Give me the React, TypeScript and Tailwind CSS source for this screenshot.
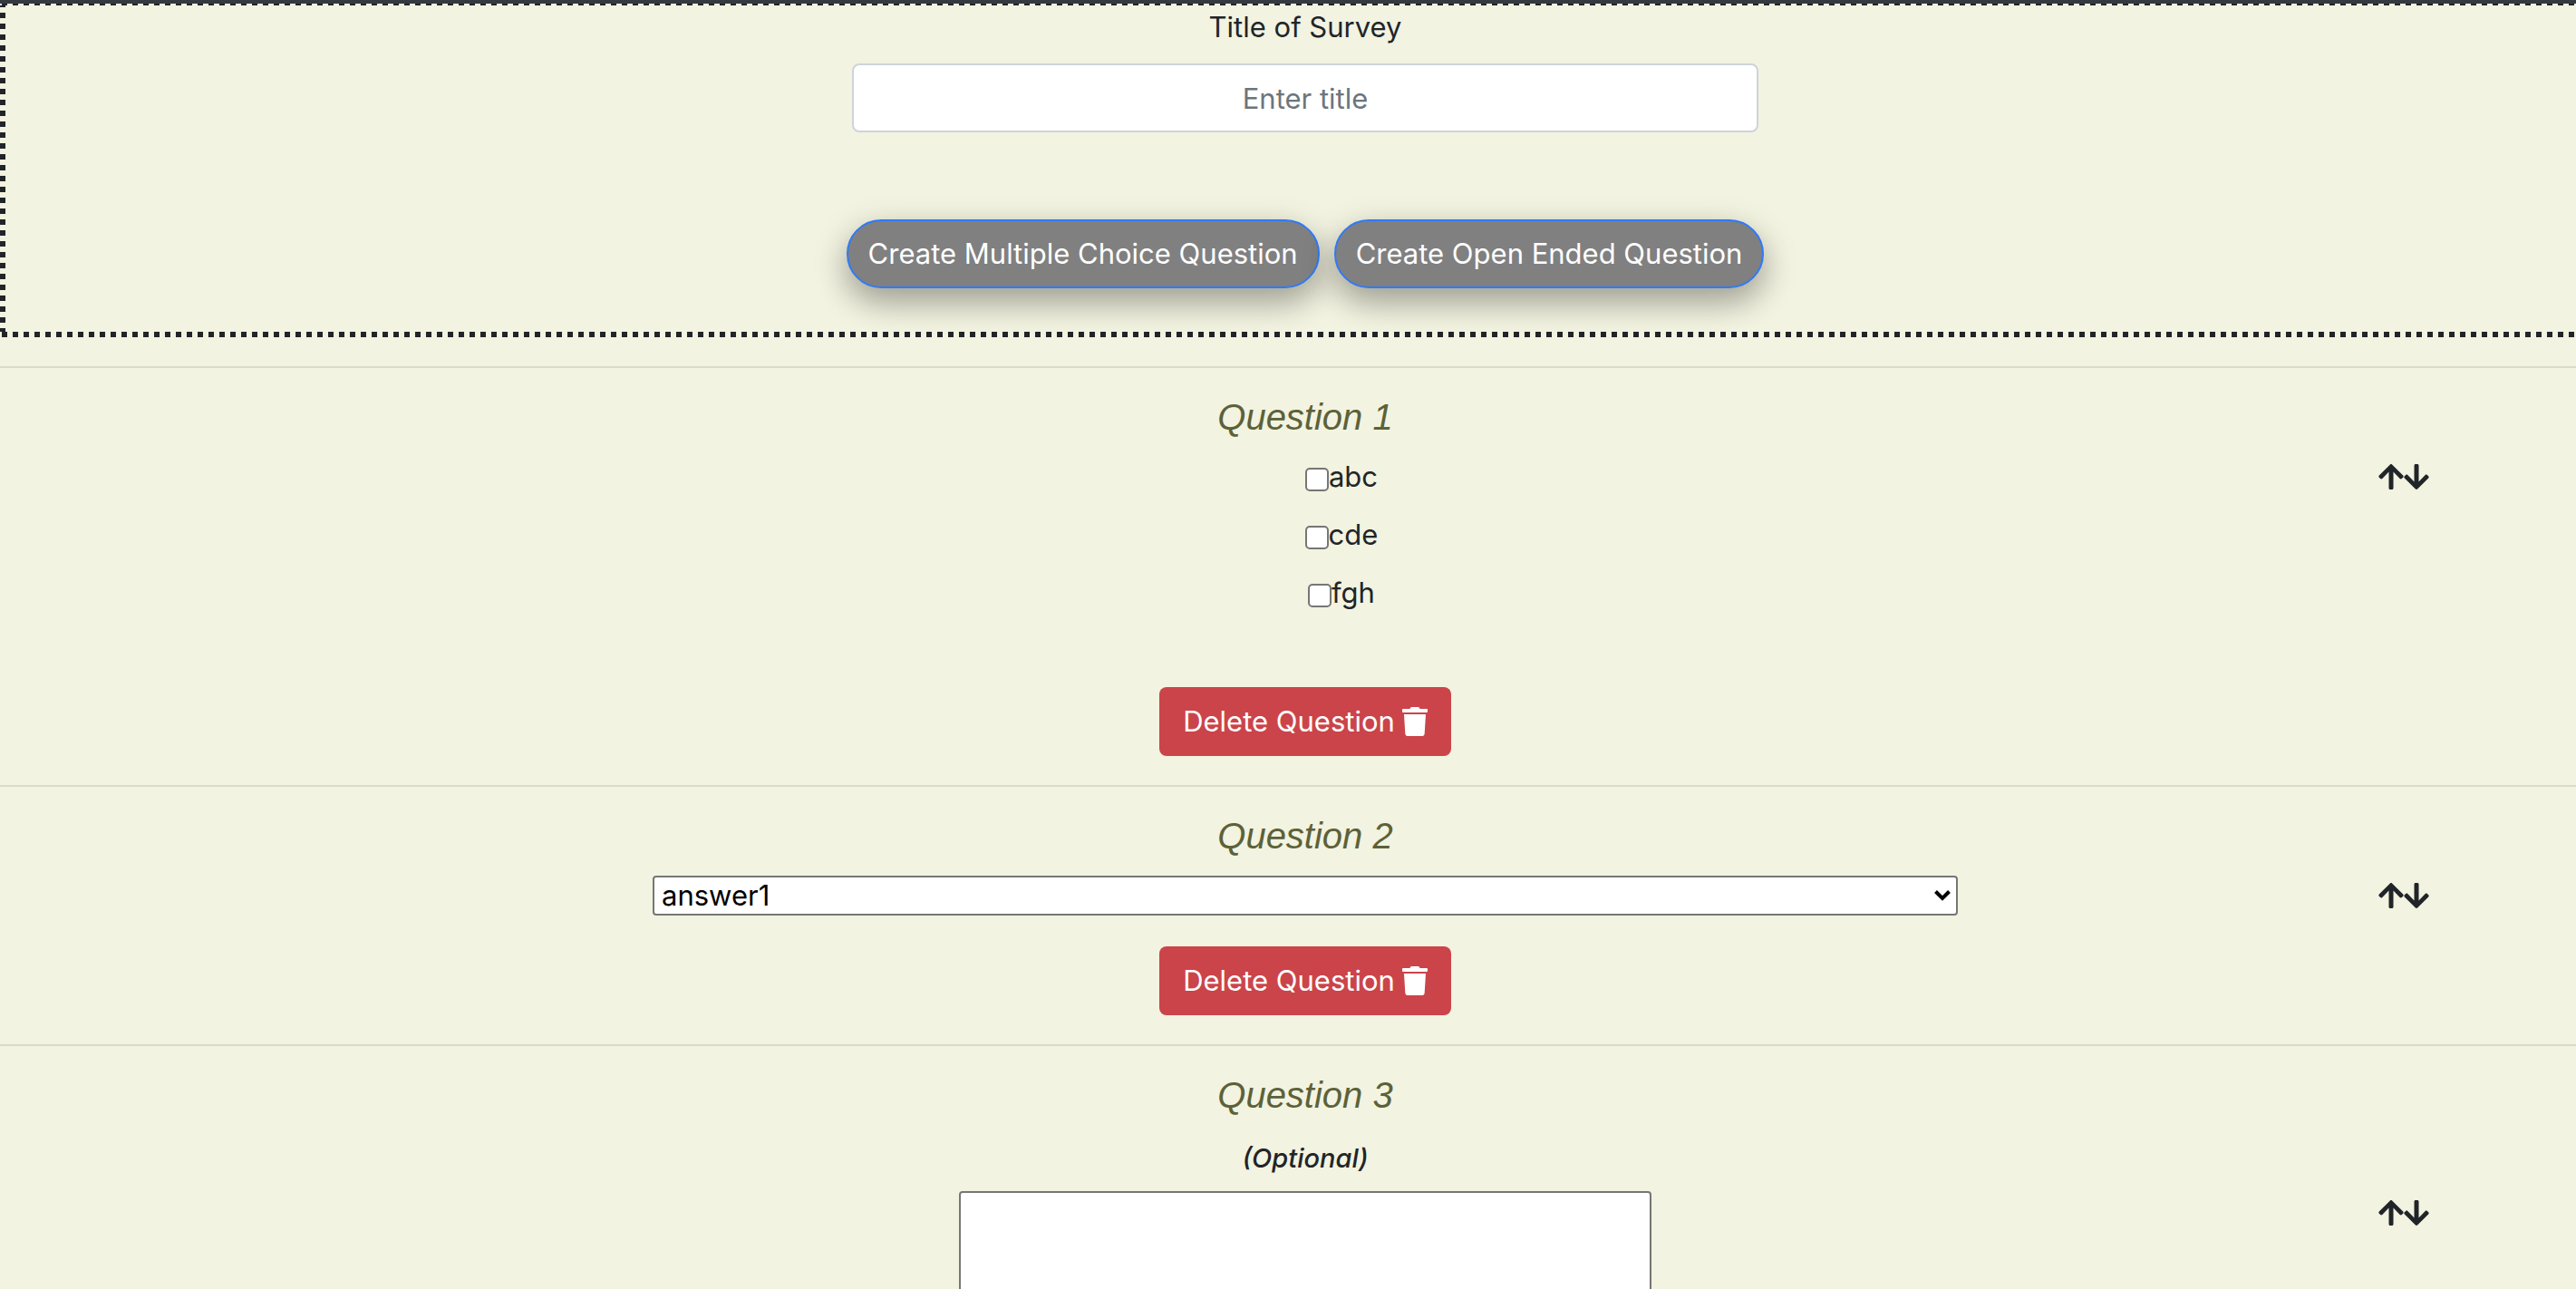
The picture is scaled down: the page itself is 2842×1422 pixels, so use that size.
import type { ReactNode } from 'react'
import { FaArrowDown, FaArrowUp, FaTrash } from 'react-icons/fa'

const horizontalDots =
  'bg-[repeating-linear-gradient(90deg,transparent_0_2px,#212529_2px_8px,transparent_8px_12px)]'
const verticalDots =
  'bg-[repeating-linear-gradient(180deg,#212529_0_2px,transparent_2px_8px,#212529_8px_12px)]'

function CreateButton({ children }: { children: ReactNode }) {
  return (
    <button
      type="button"
      className="h-[76px] rounded-full border-2 border-[#2f7af6] bg-[#808080] px-[22px] text-white shadow-[0_16px_32px_rgba(0,0,0,0.2),0_12px_40px_rgba(0,0,0,0.19)]"
    >
      {children}
    </button>
  )
}

function SurveyHeader() {
  return (
    <header>
      <div className="h-1 bg-[#343a40]" />
      <div className={`h-0.5 ${horizontalDots}`} />
      <div className="flex">
        <div className={`w-1.5 ${verticalDots}`} />
        <form className="flex flex-1 flex-col items-center pb-12">
          <label htmlFor="title">Title of Survey</label>
          <input
            id="title"
            type="text"
            placeholder="Enter title"
            className="mt-4 h-[76px] w-[1000px] rounded-lg border-2 border-[#ced4da] bg-white text-center placeholder:text-[#6c757d]"
          />
          <div className="mt-24 flex gap-4">
            <CreateButton>Create Multiple Choice Question</CreateButton>
            <CreateButton>Create Open Ended Question</CreateButton>
          </div>
        </form>
        <div className={`w-1.5 ${verticalDots}`} />
      </div>
      <div className={`h-1.5 ${horizontalDots}`} />
    </header>
  )
}

function Question({
  title,
  note,
  removable = true,
  children,
}: {
  title: string
  note?: string
  removable?: boolean
  children: ReactNode
}) {
  return (
    <section className="mt-8 border-t-2 border-[#d9dac9] pt-8">
      <h2 className="text-center font-['Liberation_Sans',sans-serif] text-[40px] leading-[44px] text-[#5c6139] italic">
        {title}
      </h2>
      {note && <p className="mt-6 text-center text-[29px] font-medium italic">{note}</p>}
      <div className={`grid grid-cols-[1fr_50%_1fr] ${note ? 'mt-3' : 'mt-5'}`}>
        <div className="col-start-2 flex flex-col items-center">{children}</div>
        <div className="flex h-12 items-center justify-end pr-[200px] text-[32px]">
          <button type="button" aria-label="Move up" className="-mx-0.5">
            <FaArrowUp />
          </button>
          <button type="button" aria-label="Move down" className="-mx-0.5">
            <FaArrowDown />
          </button>
        </div>
      </div>
      {removable && (
        <div className="mt-8 flex justify-center">
          <button
            type="button"
            className="flex h-[76px] items-center gap-2 rounded-lg bg-[#cb444a] px-[26px] text-white"
          >
            Delete Question
            <FaTrash className="h-8 w-7" />
          </button>
        </div>
      )}
    </section>
  )
}

export default function App() {
  return (
    <div className="h-screen overflow-hidden bg-[#f2f3e0] font-['Inter',sans-serif] text-[31px] leading-[48px] text-[#212529]">
      <main className="w-[calc(100%+38px)]">
        <SurveyHeader />
        <Question title="Question 1">
          <div className="mb-12 flex flex-col items-center gap-4 pl-20">
            {['abc', 'cde', 'fgh'].map((answer) => (
              <label key={answer} className="flex items-center">
                <input
                  type="checkbox"
                  className="mt-1.5 size-[26px] appearance-none rounded-[5px] border-2 border-[#767676] bg-white"
                />
                {answer}
              </label>
            ))}
          </div>
        </Question>
        <Question title="Question 2">
          <div className="grid w-full items-center py-0.5">
            <select
              aria-label="Question 2"
              className="col-start-1 row-start-1 h-11 w-full appearance-none rounded-[4px] border-2 border-[#767676] bg-white px-2 leading-10 text-black"
            >
              <option>answer1</option>
            </select>
            <svg
              viewBox="0 0 18 12"
              className="pointer-events-none col-start-1 row-start-1 mr-2 h-3 w-[18px] justify-self-end"
              fill="none"
              stroke="#000"
              strokeWidth="4"
            >
              <path d="M1.5 1.5 9 9l7.5-7.5" />
            </svg>
          </div>
        </Question>
        <Question title="Question 3" note="(Optional)" removable={false}>
          <textarea
            aria-label="Question 3"
            className="h-60 w-[764px] rounded-[4px] border-2 border-[#767676] bg-white"
          />
        </Question>
      </main>
    </div>
  )
}
